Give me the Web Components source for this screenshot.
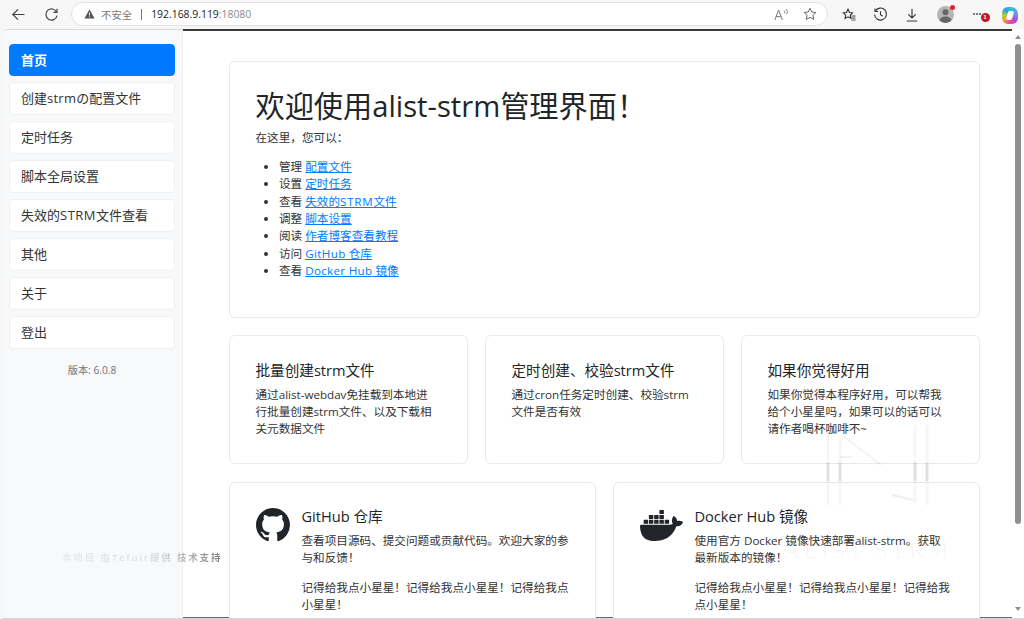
<!DOCTYPE html>
<html lang="zh-CN"><head><meta charset="utf-8"><title>alist-strm</title>
<style>
html,body{margin:0;padding:0;height:100%;overflow:hidden;background:#f7f7f7}
body{font-family:"Open Sans","Noto Sans CJK SC",sans-serif;color:#212529}
</style></head><body>
<app-shell>
  <browser-bar slot="bar"></browser-bar>
  <side-nav slot="nav" version="版本: 6.0.8">
    <nav-item active>首页</nav-item>
    <nav-item>创建<span style="letter-spacing:.25px">strm</span>の配置文件</nav-item>
    <nav-item>定时任务</nav-item>
    <nav-item>脚本全局设置</nav-item>
    <nav-item>失效的<span style="letter-spacing:.5px">STRM</span>文件查看</nav-item>
    <nav-item>其他</nav-item>
    <nav-item>关于</nav-item>
    <nav-item>登出</nav-item>
  </side-nav>
  <hero-card heading="欢迎使用alist-strm管理界面！" intro="在这里，您可以：">
    <li>管理 <a href="#">配置文件</a></li>
    <li>设置 <a href="#">定时任务</a></li>
    <li>查看 <a href="#">失效的<span style="letter-spacing:.75px">STRM</span>文件</a></li>
    <li>调整 <a href="#">脚本设置</a></li>
    <li>阅读 <a href="#">作者博客查看教程</a></li>
    <li>访问 <a href="#"><span style="letter-spacing:.35px">GitHub</span> 仓库</a></li>
    <li>查看 <a href="#"><span style="letter-spacing:.3px">Docker Hub</span> 镜像</a></li>
  </hero-card>
  <card-grid cols="3">
    <info-card heading="批量创建strm文件"><p>通过alist-webdav免挂载到本地进<br>行批量创建strm文件、以及下载相<br>关元数据文件</p></info-card>
    <info-card heading="定时创建、校验strm文件"><p>通过cron任务定时创建、校验strm文件是否有效</p></info-card>
    <info-card heading="如果你觉得好用"><p>如果你觉得本程序好用，可以帮我给个小星星吗，如果可以的话可以请作者喝杯咖啡不~</p></info-card>
  </card-grid>
  <card-grid cols="2">
    <info-card heading="GitHub 仓库" icon="github"><p>查看项目源码、提交问题或贡献代码。欢迎大家的参与和反馈！</p><p>记得给我点小星星！记得给我点小星星！记得给我点小星星！</p></info-card>
    <info-card heading="Docker Hub 镜像" icon="docker"><p>使用官方 Docker 镜像快速部署alist-strm。获取<br>最新版本的镜像！</p><p>记得给我点小星星！记得给我点小星星！记得给我点小星星！</p></info-card>
  </card-grid>
  <water-mark slot="over"></water-mark>
</app-shell>
<script>
const def=(name,html,extra={})=>{
  customElements.define(name,class extends HTMLElement{
    constructor(){super();this.attachShadow({mode:'open'}).innerHTML=html;}
    connectedCallback(){extra.init&&extra.init(this);}
  });
};
def('app-shell',`<style>
:host{display:flex;flex-direction:column;width:1024px;height:619px;overflow:hidden;position:relative;background:#f7f7f7}
.page{flex:1;min-height:0;display:flex;border-bottom:1px solid #d6d6d6;margin-left:2px;border-top-left-radius:6px;overflow:hidden}
main{flex:1;min-width:0;background:linear-gradient(#6a6a6a,#6a6a6a) bottom/100% 1.5px no-repeat #fff;border-top:2px solid #3a3a3a;padding:30px 32.5px 0 46px;overflow:hidden;display:flex;flex-direction:column;gap:17.7px;box-sizing:border-box}
.sb{width:12px;background:#fff;position:relative;display:flex;flex-direction:column;align-items:center;padding-top:6px;box-sizing:border-box}
.thumb{width:6.5px;height:480px;background:#8f8f8f;border-radius:4px;margin-top:5px}
.up{width:0;height:0;border:3.5px solid transparent;border-top:0;border-bottom:4px solid #8f8f8f}
.down{width:0;height:0;border:3.5px solid transparent;border-bottom:0;border-top:4px solid #8f8f8f;margin-top:auto;margin-bottom:7px}
</style>
<slot name="bar"></slot>
<div class="page"><slot name="nav"></slot><main><slot></slot></main>
<div class="sb"><div class="up"></div><div class="thumb"></div><div class="down"></div></div></div>
<slot name="over"></slot>`);

def('browser-bar',`<style>
:host{display:flex;align-items:center;height:29px;flex:none;background:#f7f7f7;box-sizing:border-box;font-family:"Open Sans","Noto Sans CJK SC",sans-serif;position:relative}
svg{display:block;flex:none}
.nav{display:flex;align-items:center;gap:18px;padding-left:11px;width:71px;box-sizing:border-box}
.addr{flex:none;width:757px;height:24px;margin-top:-1px;box-sizing:border-box;background:#fff;border:1px solid #e2e2e2;border-radius:12px;display:flex;align-items:center;padding-left:12px;font-size:10.4px;color:#777;white-space:nowrap}
.addr .warn{margin-right:6px}
.sep{width:1px;height:11px;background:#777;margin:0 9px}
.url{color:#222}.port{color:#8a8a8a}
.end{margin-left:auto;display:flex;align-items:center;gap:14.5px;padding-right:10px}
.tools{display:flex;align-items:center}
.avatar{display:block;width:17px;height:17px;border-radius:50%;background:#b5b5b5;overflow:hidden}
.wrap{position:relative;display:block}
.dot{position:absolute;right:-1px;top:-1px;width:5px;height:5px;border-radius:50%;background:#e8202a}
.more{position:relative;width:16px;height:14px;display:block}
.more i{position:absolute;top:5px;width:2px;height:2px;background:#555;border-radius:50%}
.badge{position:absolute;left:7.5px;top:5.5px;width:9px;height:9px;border-radius:50%;background:#c4161c;color:#fff;font:bold 6px/9px "Liberation Sans",sans-serif;text-align:center}
.cop{position:relative;display:block;width:16px;height:17px;border-radius:6px 7px 6px 6px;background:conic-gradient(from 10deg,#2fc3d8,#7a8cf0 20%,#b04ae0 33%,#f04f98 50%,#f8a23a 62%,#a5d23f 74%,#2f9de8 86%,#2fc3d8);overflow:hidden}
.cop b{position:absolute;left:5px;top:4px;width:6px;height:9px;background:#fff;border-radius:2px;transform:skewX(-14deg)}
</style>
<div class="nav">
<svg width="15" height="15" viewBox="0 0 15 15" fill="none" stroke="#444" stroke-width="1.2"><path d="M13.5 7.500H1.800M7 2.300 1.800 7.500 7 12.700"/></svg>
<svg width="15" height="15" viewBox="0 0 15 15" fill="none" stroke="#444" stroke-width="1.2"><path d="M12.600 5.200A5.600 5.600 0 1 0 13 8.600"/><path d="M13 1.800v3.600H9.400"/></svg>
</div>
<div class="addr">
<svg class="warn" width="11" height="10" viewBox="0 0 11 10"><path d="M5.500.6 10.600 9.600H.4Z" fill="#555"/><path d="M5.500 3.600v3M5.500 7.400v1" stroke="#fff" stroke-width=".9"/></svg>
<span>不安全</span><span class="sep"></span><span class="url">192.168.9.119</span><span class="port">:18080</span>
<span class="end">
<svg width="15" height="13" viewBox="0 0 15 13" fill="none" stroke="#777" stroke-width="1"><path d="M.8 12 4.600 2l3.800 10M2.200 8.600h4.800"/><path d="M10 2.500c1 .6 1 2 .3 3M12 1c1.600 1.200 1.700 3.600.6 5.200" stroke-width=".9"/></svg>
<svg width="14" height="14" viewBox="0 0 14 14" fill="none" stroke="#666" stroke-width="1"><path d="M7 1.200 8.800 5l4.100.5-3 2.800.8 4.100L7 10.400l-3.700 2 .8-4.100-3-2.800L5.200 5Z"/></svg>
</span></div>
<div class="tools">
<svg style="margin-left:14px" width="14" height="14" viewBox="0 0 14 14" fill="none" stroke="#333" stroke-width="1.1"><path d="M6 1.200 7.500 4.500l3 .4-2.200 2.200.6 3.200L6 8.800l-2.900 1.600.6-3.200L1.300 4.900l3.200-.4Z"/><path d="M9.500 8h4M9.500 10h4M9.500 12h4" stroke-width=".9"/></svg>
<svg style="margin-left:16.500px" width="15" height="15" viewBox="0 0 15 15" fill="none" stroke="#333" stroke-width="1.1"><path d="M2.200 4.200A6 6 0 1 1 1.500 7.500"/><path d="M2 1.500v3h3M7.500 4.200v3.500l2.300 1.500"/></svg>
<svg style="margin-left:17.500px" width="14" height="14" viewBox="0 0 14 14" fill="none" stroke="#333" stroke-width="1.1"><path d="M7 .8v9M3.300 6.300 7 10l3.700-3.700M1.800 13h10.400"/></svg>
<span class="wrap" style="margin-left:17.500px"><span class="avatar"><svg width="17" height="17" viewBox="0 0 17 17"><circle cx="8.500" cy="6.300" r="3" fill="#666"/><ellipse cx="8.500" cy="14.500" rx="6" ry="4" fill="#666"/></svg></span><span class="dot"></span></span>
<span class="more" style="margin-left:19.500px"><i style="left:0"></i><i style="left:3px"></i><i style="left:6px"></i><span class="badge">1</span></span>
<span class="cop" style="margin-left:12.500px;margin-top:1px"><b></b></span>
</div>`);

def('side-nav',`<style>
:host{display:flex;flex-direction:column;flex:none;width:181px;box-sizing:border-box;background:#f8f9fa;padding:13.5px 8px 0 7px;gap:6.8px;border-top:1px solid #d8d8d8;box-shadow:inset -1px 0 0 #f0f1f2;border-top-left-radius:6px}
.v{margin-top:8px;text-align:center;font-size:10.2px;line-height:15px;color:#6c757d}
</style><slot></slot><div class="v"></div>`,{init(el){el.shadowRoot.querySelector('.v').textContent=el.getAttribute('version');}});

def('nav-item',`<style>
:host{display:block;height:32.2px;box-sizing:border-box;background:#fff;border:1px solid #eff0f1;border-radius:4px;padding:0 11px;font-size:13px;line-height:31.5px;color:#333;white-space:nowrap}
:host([active]){background:#007bff;border-color:#007bff;color:#fff;font-weight:600;line-height:31px}
</style><slot></slot>`);

const cardBase=`:host{display:block;box-sizing:border-box;background:#fff;border:1px solid #e9e9ea;border-radius:6px;padding:25.5px 25.5px 25.3px;min-width:0}
::slotted(p){margin:0 0 12px;font-size:11.62px;line-height:17.33px;color:#333}
::slotted(p:last-child){margin-bottom:0}`;

def('hero-card',`<style>${cardBase}
:host{flex:none;height:256.5px}
h1{margin:1px 0 5px;font-weight:400;font-size:29.2px;line-height:35px;color:#212529;white-space:nowrap}
p{margin:0 0 12.3px;font-size:11.62px;line-height:17.33px;color:#333}
ul{margin:0;padding:0 0 0 23.5px;font-size:11.62px;line-height:17.33px;color:#333}
::slotted(li){font-size:11.62px;line-height:17.33px}
</style><h1></h1><p></p><ul><slot></slot></ul>`,{init(el){
  const r=el.shadowRoot;r.querySelector('h1').textContent=el.getAttribute('heading');r.querySelector('p').textContent=el.getAttribute('intro');
  el.querySelectorAll('a').forEach(a=>{a.style.color='#007bff'});
}});

def('card-grid',`<style>:host{display:grid;gap:17.5px;flex:none}</style><slot></slot>`,{init(el){
  el.style.gridTemplateColumns=`repeat(${el.getAttribute('cols')},minmax(0,1fr))`;
}});

const ICONS={
github:`<svg width="34" height="34" viewBox="0 0 16 16" fill="#212529"><path d="M8 0C3.580 0 0 3.580 0 8c0 3.540 2.290 6.530 5.470 7.590.4.070.55-.170.55-.380 0-.190-.010-.820-.010-1.490-2.010.370-2.530-.490-2.690-.940-.090-.230-.480-.940-.820-1.130-.280-.150-.680-.520-.010-.530.630-.010 1.080.580 1.230.820.720 1.210 1.870.870 2.330.660.070-.520.280-.870.510-1.070-1.780-.200-3.640-.890-3.640-3.950 0-.870.310-1.590.820-2.150-.080-.200-.360-1.020.080-2.120 0 0 .670-.210 2.200.820.640-.180 1.320-.270 2-.270s1.360.090 2 .270c1.530-1.040 2.200-.820 2.200-.820.440 1.100.160 1.920.080 2.120.510.560.820 1.270.820 2.150 0 3.070-1.870 3.750-3.650 3.950.290.250.540.730.540 1.480 0 1.070-.010 1.930-.010 2.200 0 .210.150.460.550.380A8.010 8.010 0 0 0 16 8c0-4.420-3.580-8-8-8Z"/></svg>`,
docker:`<svg width="43" height="43" viewBox="0 0 24 24" fill="#212529" style="margin-top:-4px;display:block"><path d="M13.983 11.078h2.119a.186.186 0 00.186-.185V9.006a.186.186 0 00-.186-.186h-2.119a.185.185 0 00-.185.185v1.888c0 .102.083.185.185.185m-2.954-5.430h2.118a.186.186 0 00.186-.186V3.574a.186.186 0 00-.186-.185h-2.118a.185.185 0 00-.185.185v1.888c0 .102.082.185.185.186m0 2.716h2.118a.187.187 0 00.186-.186V6.290a.186.186 0 00-.186-.185h-2.118a.185.185 0 00-.185.185v1.887c0 .102.082.185.185.186m-2.930 0h2.120a.186.186 0 00.184-.186V6.290a.185.185 0 00-.185-.185H8.100a.185.185 0 00-.185.185v1.887c0 .102.083.185.185.186m-2.964 0h2.119a.186.186 0 00.185-.186V6.290a.185.185 0 00-.185-.185H5.136a.186.186 0 00-.186.185v1.887c0 .102.084.185.186.186m5.893 2.715h2.118a.186.186 0 00.186-.185V9.006a.186.186 0 00-.186-.186h-2.118a.185.185 0 00-.185.185v1.888c0 .102.082.185.185.185m-2.930 0h2.120a.185.185 0 00.184-.185V9.006a.185.185 0 00-.184-.186h-2.120a.185.185 0 00-.184.185v1.888c0 .102.083.185.185.185m-2.964 0h2.119a.185.185 0 00.185-.185V9.006a.185.185 0 00-.184-.186h-2.120a.186.186 0 00-.186.186v1.887c0 .102.084.185.186.185m-2.920 0h2.120a.185.185 0 00.184-.185V9.006a.185.185 0 00-.184-.186h-2.120a.185.185 0 00-.184.185v1.888c0 .102.082.185.185.185M23.763 9.890c-.065-.051-.672-.510-1.954-.510-.338.001-.676.030-1.010.087-.248-1.700-1.653-2.530-1.716-2.566l-.344-.199-.226.327c-.284.438-.490.922-.612 1.430-.230.970-.090 1.882.403 2.661-.595.332-1.550.413-1.744.420H.751a.751.751 0 00-.750.748 11.376 11.376 0 00.692 4.062c.545 1.428 1.355 2.480 2.410 3.124 1.180.723 3.100 1.137 5.275 1.137.983.003 1.963-.086 2.930-.266a12.248 12.248 0 003.823-1.389c.980-.567 1.860-1.288 2.610-2.136 1.252-1.418 1.998-2.997 2.553-4.400h.221c1.372 0 2.215-.549 2.680-1.009.309-.293.550-.650.707-1.046l.098-.288Z"/></svg>`};

def('info-card',`<style>${cardBase}
:host{display:flex;gap:12px;align-items:flex-start}
.b{flex:1;min-width:0}
h3{margin:0 0 6.5px;font-weight:400;font-size:14.6px;line-height:17.5px;color:#212529;white-space:nowrap}
.i{flex:none;display:block}
.i:empty{display:none}
</style><div class="i"></div><div class="b"><h3></h3><slot></slot></div>`,{init(el){
  const r=el.shadowRoot;r.querySelector('h3').textContent=el.getAttribute('heading');
  const ic=el.getAttribute('icon');if(ic)r.querySelector('.i').innerHTML=ICONS[ic];
}});

def('water-mark',`<style>
:host{position:absolute;inset:0;pointer-events:none;display:block}
.t{position:absolute;left:62px;top:551px;font-size:9.5px;line-height:13px;letter-spacing:1.85px;font-weight:600;color:#555;white-space:nowrap;-webkit-mask-image:linear-gradient(90deg,rgba(0,0,0,.08),rgba(0,0,0,.18) 60%,rgba(0,0,0,.75));mask-image:linear-gradient(90deg,rgba(0,0,0,.08),rgba(0,0,0,.18) 60%,rgba(0,0,0,.75))}
.s{position:absolute;left:783px;top:536px;font-family:"Liberation Serif",serif;font-size:24px;line-height:28px;letter-spacing:3px;color:rgba(0,0,0,.035);white-space:nowrap}
svg{position:absolute;left:820px;top:425px}
</style>
<div class="t">本项目 由Tefuir提供 技术支持</div>
<svg width="115" height="85" viewBox="0 0 115 85" fill="none" stroke="#000" stroke-opacity=".035">
<path d="M8 0v80M20 15v65M95 0v78M107 0v80" stroke-width="3"/>
<path d="M8 38v18M20 38v18M95 38v18M107 38v18" stroke-width="3" stroke-opacity=".09"/>
<path d="M22 10 61 40" stroke-width="2" stroke-opacity=".05"/>
<path d="M20 32h12" stroke-width="2" stroke-opacity=".05"/>
<path d="M72 70l21 5" stroke-width="2" stroke-opacity=".07"/>
</svg>
<div class="s">ALIST STRM</div>`);
</script>
</body></html>
